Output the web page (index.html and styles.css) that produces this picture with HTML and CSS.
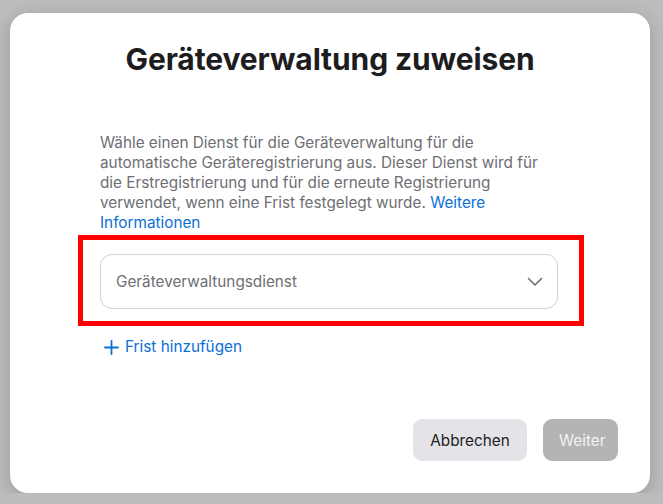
FILE: index.html
```html
<!DOCTYPE html>
<html lang="de">
<head>
  <meta charset="UTF-8">
  <title>Geräteverwaltung zuweisen</title>
  <link rel="stylesheet" href="styles.css">
</head>
<body>

  <div class="dialog">
    <h1>Geräteverwaltung zuweisen</h1>

    <p class="hinweis">
      Wähle einen Dienst für die Geräteverwaltung für die automatische Geräteregistrierung aus. Dieser Dienst wird für die Erstregistrierung und für die erneute Registrierung verwendet, wenn eine Frist festgelegt wurde. <a href="#">Weitere Informationen</a>
    </p>

    <div class="markierung">
      <div class="auswahl">
        <span>Geräteverwaltungsdienst</span>
        <svg width="16" height="10" viewBox="0 0 16 10">
          <path d="M1.5 1.5 L8 8 L14.5 1.5" fill="none" stroke="#6e6e73" stroke-width="1.6" stroke-linecap="round" stroke-linejoin="round"/>
        </svg>
      </div>
    </div>

    <a class="frist" href="#">
      <svg width="15" height="15" viewBox="0 0 15 15">
        <path d="M7.5 1 V14 M1 7.5 H14" stroke="#0a6fd6" stroke-width="1.8" stroke-linecap="round"/>
      </svg>
      Frist hinzufügen
    </a>

    <div class="btns">
      <button class="abbrechen">Abbrechen</button>
      <button class="weiter" disabled>Weiter</button>
    </div>
  </div>

</body>
</html>
```

FILE: styles.css
```css
body {
  font-family: Inter, "Noto Sans", sans-serif;
  background-color: #bcbcbc;
  margin: 0;
  padding: 13px 0 0 10px;
}

.dialog {
  width: 640px;
  height: 480px;
  box-sizing: border-box;
  background-color: #ffffff;
  border-radius: 18px;
  box-shadow: 0 4px 18px rgba(0, 0, 0, 0.18);
  padding: 28px 32px 32px 90px;
  display: flex;
  flex-direction: column;
}

h1 {
  margin: 0 58px 0 0;
  font-size: 30px;
  line-height: 36px;
  font-weight: 700;
  color: #1d1d1f;
  text-align: center;
  letter-spacing: -0.1px;
}

.hinweis {
  width: 452px;
  margin: 56px 0 0 0;
  font-size: 15.3px;
  line-height: 20px;
  color: #6e6e73;
}

.hinweis a,
.frist {
  color: #0a6fd6;
  text-decoration: none;
}

.markierung {
  margin: 2px 0 0 -22px;
  width: 506px;
  box-sizing: border-box;
  border: 5px solid #ff0000;
  padding: 14px 21px 12px 17px;
}

.auswahl {
  height: 55px;
  box-sizing: border-box;
  border: 1px solid #d2d2d7;
  border-radius: 12px;
  padding: 0 14px 0 15px;
  display: flex;
  align-items: center;
  justify-content: space-between;
  font-size: 15.3px;
  color: #6e6e73;
}

.frist {
  margin: 11px 0 0 4px;
  display: flex;
  align-items: center;
  gap: 6px;
  font-size: 15.3px;
  line-height: 20px;
}

.btns {
  margin-top: auto;
  display: flex;
  justify-content: flex-end;
  gap: 16px;
}

.btns button {
  height: 42px;
  border: none;
  border-radius: 9px;
  font-family: inherit;
  font-size: 15.3px;
  padding: 0 16px;
}

.abbrechen {
  width: 114px;
  background-color: #e3e3e8;
  color: #1d1d1f;
}

.weiter {
  width: 75px;
  background-color: #b4b4b4;
  color: #f2f2f2;
}
```
